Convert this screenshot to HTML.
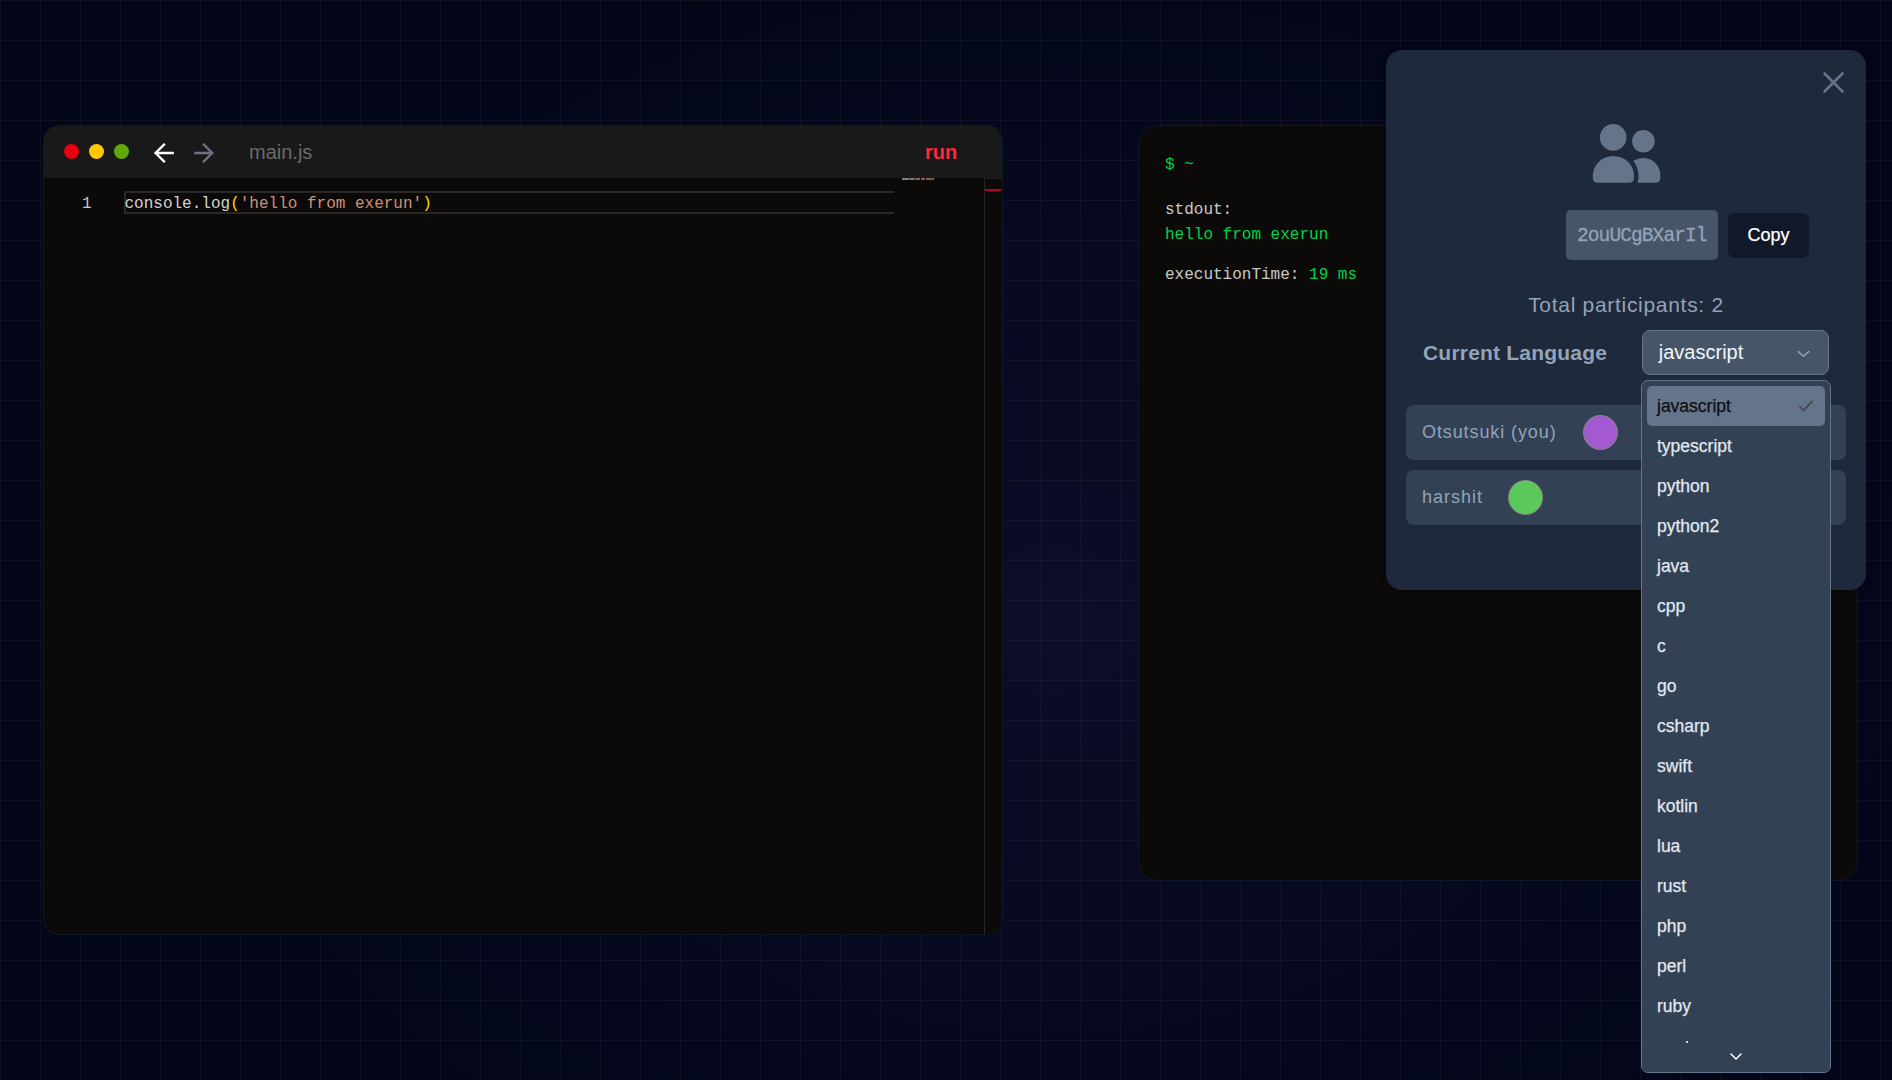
<!DOCTYPE html>
<html><head><meta charset="utf-8">
<style>
*{box-sizing:border-box;margin:0;padding:0}
html,body{width:1892px;height:1080px;overflow:hidden}
body{position:relative;background:#020617;font-family:"Liberation Sans",sans-serif}
#glow{position:absolute;left:0;top:0;width:1892px;height:1080px;
 background:radial-gradient(ellipse 950px 700px at 1050px 620px, rgba(110,80,230,0.09) 0%, rgba(110,80,230,0.045) 50%, rgba(110,80,230,0) 100%)}
#grid{position:absolute;left:0;top:0;width:1892px;height:1080px;
 background-image:linear-gradient(to right, rgba(128,128,128,0.08) 1px, transparent 1px),linear-gradient(to bottom, rgba(128,128,128,0.08) 1px, transparent 1px);
 background-size:40px 40px}
.abs{position:absolute}
#editor{left:43px;top:125px;width:960px;height:810px;border-radius:16px;background:#0c0a09;border:1px solid #0e1829;overflow:hidden}
#titlebar{position:absolute;left:0;top:0;width:100%;height:52px;background:#191919}
.dot{position:absolute;top:18px;width:15px;height:15px;border-radius:50%}
#term{left:1138px;top:125px;width:720px;height:756px;border-radius:20px;background:#0c0a09;border:1px solid #0e1829}
.mono{font-family:"Liberation Mono",monospace}
#modal{left:1386px;top:50px;width:480px;height:540px;border-radius:16px;background:#1e293b;box-shadow:0 2px 6px rgba(0,0,0,0.25)}
#dropdown{left:1641px;top:380px;width:190px;height:693px;border-radius:7px;background:#334155;border:1px solid #64748b;overflow:hidden}
.item{position:absolute;left:15px;font-size:17.5px;color:#e2e8f0;line-height:40px;height:40px;-webkit-text-stroke:0.25px currentColor}
</style></head>
<body>
<div id="glow"></div>
<div id="grid"></div>

<!-- editor window -->
<div id="editor" class="abs">
  <div id="titlebar">
    <div class="dot" style="left:20px;background:#e60010"></div>
    <div class="dot" style="left:45px;background:#ffc800"></div>
    <div class="dot" style="left:70px;background:#60a80a"></div>
    <div class="abs" style="left:205px;top:15px;font-size:20px;color:#6b6b6b">main.js</div>
    <div class="abs" style="left:881px;top:15px;font-size:20px;font-weight:bold;color:#fc2a3a">run</div>
  </div>
  <div class="abs mono" style="left:38px;top:69px;font-size:16px;color:#c6c6c6">1</div>
  <div class="abs" style="left:80px;top:65px;width:780px;height:22.6px;border:2px solid #282828;border-right:none"></div>
  <div class="abs" style="left:850px;top:52px;width:90px;height:200px;background:#0c0a09"></div>
  <svg class="abs" style="left:858px;top:52px" width="32" height="2" viewBox="0 0 32 2"><rect x="0" y="0" width="1" height="2" fill="#a8a8a8" opacity="0.75"/><rect x="1" y="0" width="1" height="2" fill="#a8a8a8" opacity="0.75"/><rect x="2" y="0" width="1" height="2" fill="#a8a8a8" opacity="0.75"/><rect x="3" y="0" width="1" height="2" fill="#a8a8a8" opacity="0.75"/><rect x="4" y="0" width="1" height="2" fill="#a8a8a8" opacity="0.75"/><rect x="5" y="0" width="1" height="2" fill="#a8a8a8" opacity="0.75"/><rect x="6" y="0" width="1" height="2" fill="#a8a8a8" opacity="0.75"/><rect x="7" y="0" width="1" height="2" fill="#a8a8a8" opacity="0.35"/><rect x="8" y="0" width="1" height="2" fill="#a8a8a8" opacity="0.75"/><rect x="9" y="0" width="1" height="2" fill="#a8a8a8" opacity="0.75"/><rect x="10" y="0" width="1" height="2" fill="#a8a8a8" opacity="0.75"/><rect x="11" y="0" width="1" height="2" fill="#c9b040" opacity="0.75"/><rect x="12" y="0" width="1" height="2" fill="#b07a60" opacity="0.35"/><rect x="13" y="0" width="1" height="2" fill="#b07a60" opacity="0.75"/><rect x="14" y="0" width="1" height="2" fill="#b07a60" opacity="0.75"/><rect x="15" y="0" width="1" height="2" fill="#b07a60" opacity="0.75"/><rect x="16" y="0" width="1" height="2" fill="#b07a60" opacity="0.75"/><rect x="17" y="0" width="1" height="2" fill="#b07a60" opacity="0.75"/><rect x="19" y="0" width="1" height="2" fill="#b07a60" opacity="0.75"/><rect x="20" y="0" width="1" height="2" fill="#b07a60" opacity="0.75"/><rect x="21" y="0" width="1" height="2" fill="#b07a60" opacity="0.75"/><rect x="22" y="0" width="1" height="2" fill="#b07a60" opacity="0.75"/><rect x="24" y="0" width="1" height="2" fill="#b07a60" opacity="0.75"/><rect x="25" y="0" width="1" height="2" fill="#b07a60" opacity="0.75"/><rect x="26" y="0" width="1" height="2" fill="#b07a60" opacity="0.75"/><rect x="27" y="0" width="1" height="2" fill="#b07a60" opacity="0.75"/><rect x="28" y="0" width="1" height="2" fill="#b07a60" opacity="0.75"/><rect x="29" y="0" width="1" height="2" fill="#b07a60" opacity="0.75"/><rect x="30" y="0" width="1" height="2" fill="#b07a60" opacity="0.35"/><rect x="31" y="0" width="1" height="2" fill="#c9b040" opacity="0.75"/></svg>
  
  <div class="abs mono" style="left:80.5px;top:69px;font-size:16px;color:#d4d4d4;white-space:pre">console.log<span style="color:#ffd700">(</span><span style="color:#ce9178">'hello from exerun'</span><span style="color:#ffd700">)</span></div>
  <div class="abs" style="left:940px;top:52px;width:1px;height:758px;background:#262626"></div>
  <div class="abs" style="left:941px;top:52px;width:16px;height:1px;background:#1f1f1f"></div>
  <div class="abs" style="left:941px;top:63px;width:16px;height:2px;background:#b3002d"></div>
</div>

<!-- terminal -->
<div id="term" class="abs">
  <div class="abs mono" style="left:26px;top:30px;font-size:16px;color:#00d34c;white-space:pre">$ ~</div>
  <div class="abs mono" style="left:26px;top:74.6px;font-size:16px;color:#cacaca">stdout:</div>
  <div class="abs mono" style="left:26px;top:99.6px;font-size:16px;color:#00d34c">hello from exerun</div>
  <div class="abs mono" style="left:26px;top:140.2px;font-size:16px;color:#cacaca;white-space:pre">executionTime: <span style="color:#00d34c">19 ms</span></div>
</div>

<!-- modal -->
<div id="modal" class="abs">
  <svg class="abs" style="left:434px;top:19px" width="28" height="28" viewBox="0 0 28 28" fill="none" stroke="#64748b" stroke-width="2.6" stroke-linecap="round"><path d="M4.5 4.5L22.5 22.5M22.5 4.5L4.5 22.5"/></svg>
  <svg class="abs" style="left:206px;top:73px" width="70" height="62" viewBox="0 0 70 62">
    <defs><mask id="gapm" maskUnits="userSpaceOnUse" x="0" y="0" width="70" height="62"><rect x="0" y="0" width="70" height="62" fill="#fff"/><path d="M0.8 53 A20.6 20 0 0 1 42 53 L42 54.7 Q42 59.7 37 59.7 L5.8 59.7 Q0.8 59.7 0.8 54.7 Z" fill="#000" stroke="#000" stroke-width="9"/></mask></defs>
    <g fill="#64748b">
      <circle cx="21.2" cy="14.4" r="13.3"/>
      <circle cx="51.4" cy="18.2" r="11.3"/>
      <path mask="url(#gapm)" d="M34.3 59.7 L63.3 59.7 Q68.3 59.7 68.3 54.7 L68.3 52 A17 17 0 0 0 34.3 52 Z"/>
      <path d="M0.8 53 A20.6 20 0 0 1 42 53 L42 54.7 Q42 59.7 37 59.7 L5.8 59.7 Q0.8 59.7 0.8 54.7 Z"/>
    </g>
  </svg>
  <div class="abs mono" style="left:180px;top:160px;width:152px;height:50px;border-radius:5px;background:#475569;color:#94a3b8;font-size:19.5px;letter-spacing:-0.9px;line-height:52.6px;padding-left:11px;-webkit-text-stroke:0.3px #94a3b8">2ouUCgBXarIl</div>
  <div class="abs" style="left:342px;top:163px;width:81px;height:45px;border-radius:7px;background:#111827;color:#ffffff;font-size:18px;line-height:45px;text-align:center;-webkit-text-stroke:0.25px #fff">Copy</div>
  <div class="abs" style="left:0;top:240px;width:480px;text-align:center;font-size:21px;letter-spacing:0.7px;color:#94a3b8;line-height:30px">Total participants: 2</div>
  <div class="abs" style="left:37px;top:288px;font-size:21px;font-weight:bold;letter-spacing:0.2px;color:#94a3b8;line-height:30px">Current Language</div>
  <div class="abs" style="left:256px;top:280px;width:187px;height:45px;border-radius:8px;background:#475569;border:1px solid #64748b">
    <div class="abs" style="left:15.8px;top:5.5px;font-size:20px;color:#f1f5f9;line-height:30px">javascript</div>
    <svg class="abs" style="left:152px;top:16px" width="16" height="12" viewBox="0 0 16 12" fill="none" stroke="#94a3b8" stroke-width="1.5" stroke-linecap="round" stroke-linejoin="round"><path d="M3.3 4.6L8.5 9.3L13.7 4.6"/></svg>
  </div>
  <div class="abs" style="left:20px;top:355px;width:440px;height:54.5px;border-radius:8px;background:#334155">
    <div class="abs" style="left:16px;top:12px;font-size:18px;letter-spacing:0.9px;color:#94a3b8;line-height:30px">Otsutsuki (you)</div>
    <div class="abs" style="left:177px;top:10px;width:35px;height:35px;border-radius:50%;background:#a35ad0;border:1px solid #8b8780"></div>
  </div>
  <div class="abs" style="left:20px;top:420px;width:440px;height:54.5px;border-radius:8px;background:#334155">
    <div class="abs" style="left:16px;top:12px;font-size:18px;letter-spacing:1px;color:#94a3b8;line-height:30px">harshit</div>
    <div class="abs" style="left:102px;top:10px;width:35px;height:35px;border-radius:50%;background:#5ac85a;border:1px solid #8b8780"></div>
  </div>
</div>

<!-- dropdown -->
<div id="dropdown" class="abs">
<div class="abs" style="left:5px;top:4.7px;width:178px;height:40px;border-radius:5px;background:#64748b"></div>
<div class="item" style="top:4.7px;color:#0f0f0f">javascript</div>
<svg class="abs" style="left:154px;top:16px" width="20" height="16" viewBox="0 0 20 16" fill="none" stroke="#454545" stroke-width="1.6" stroke-linecap="butt" stroke-linejoin="miter"><path d="M3.3 9.2L7.6 13.4L16.7 3.9"/></svg>
<div class="item" style="top:44.7px">typescript</div>
<div class="item" style="top:84.7px">python</div>
<div class="item" style="top:124.7px">python2</div>
<div class="item" style="top:164.7px">java</div>
<div class="item" style="top:204.7px">cpp</div>
<div class="item" style="top:244.7px">c</div>
<div class="item" style="top:284.7px">go</div>
<div class="item" style="top:324.7px">csharp</div>
<div class="item" style="top:364.7px">swift</div>
<div class="item" style="top:404.7px">kotlin</div>
<div class="item" style="top:444.7px">lua</div>
<div class="item" style="top:484.7px">rust</div>
<div class="item" style="top:524.7px">php</div>
<div class="item" style="top:564.7px">perl</div>
<div class="item" style="top:604.7px">ruby</div>
  <div class="abs" style="left:0;top:665px;width:188px;height:27px;background:#334155"></div>
  <div class="abs" style="left:44px;top:659.5px;width:2px;height:2px;background:#cbd5e1"></div>
  <svg class="abs" style="left:86px;top:669px" width="16" height="12" viewBox="0 0 16 12" fill="none" stroke="#ffffff" stroke-width="1.5" stroke-linecap="round" stroke-linejoin="round"><path d="M3 4L8 9L13 4"/></svg>
</div>
<svg class="abs" style="left:0;top:0" width="1892" height="1080" viewBox="0 0 1892 1080" fill="none">
  <path d="M164 144.6L155.6 153L164 161.4M155.6 153H172.7" stroke="#ffffff" stroke-width="2.3" stroke-linecap="square"/>
  <path d="M203.8 144.6L212.2 153L203.8 161.4M212.2 153H195.3" stroke="#6b7385" stroke-width="2.3" stroke-linecap="square"/>
</svg>
</body></html>
